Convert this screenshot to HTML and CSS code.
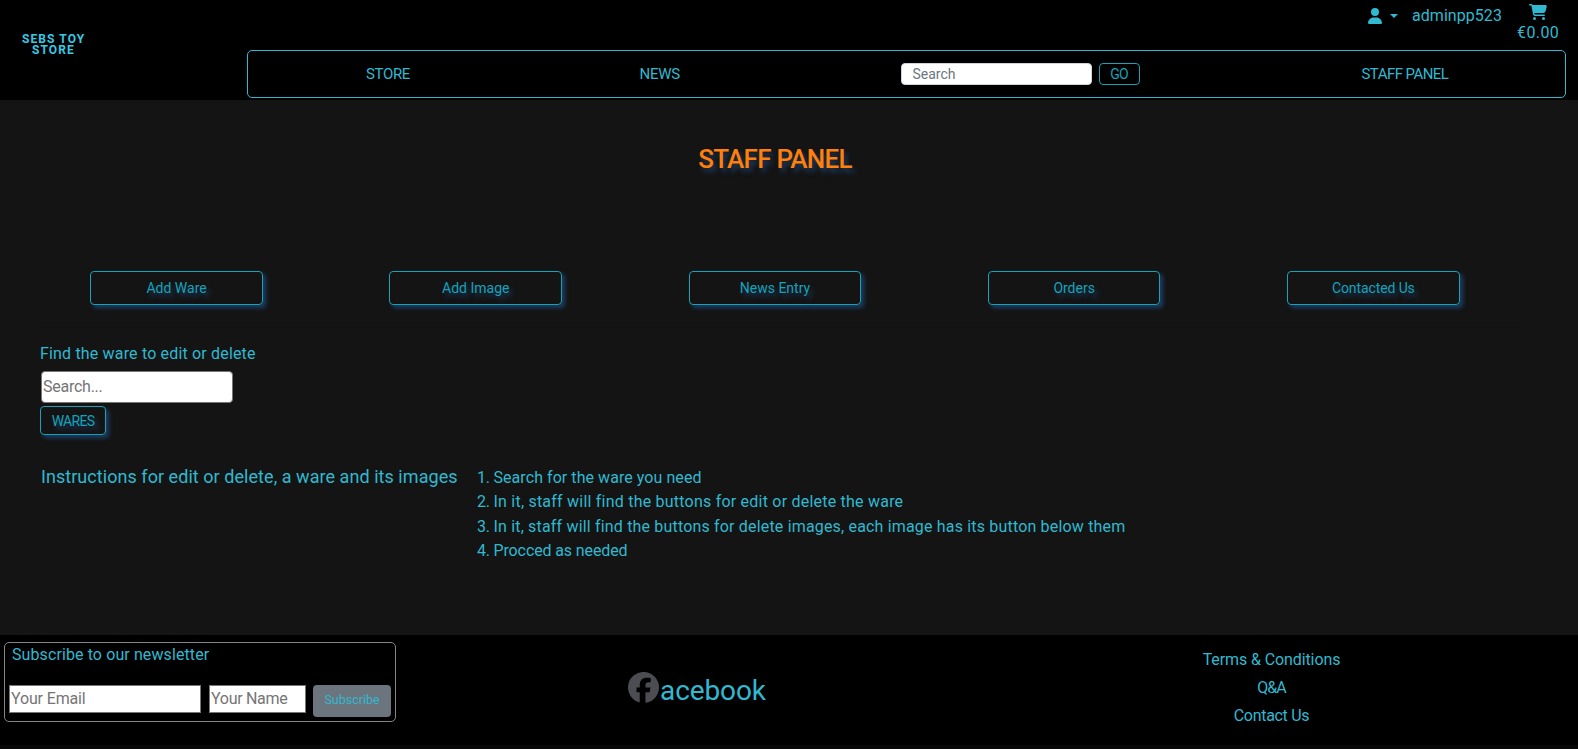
FILE: index.html
```html
<!DOCTYPE html>
<html lang="en">
<head>
<meta charset="utf-8">
<title>Staff Panel</title>
<link rel="stylesheet" href="styles.css">
</head>
<body>
<header class="header">
  <a class="logo"><span class="logo-top">SEBS TOY</span><span class="logo-bottom">STORE</span></a>
  <div class="header-main">
    <div class="account">
      <svg class="user-icon" viewBox="0 0 448 512"><path d="M224 256a128 128 0 1 0 0-256 128 128 0 1 0 0 256zm-46 48C80 304 0 384 0 482c0 17 13 30 30 30h388c17 0 30-13 30-30 0-98-80-178-178-178z"/></svg>
      <span class="caret"></span>
      <span class="username">adminpp523</span>
      <div class="cart">
        <svg class="cart-icon" viewBox="0 0 576 512"><path d="M0 24C0 11 11 0 24 0h46c22 0 41 13 50 32h411c26 0 45 25 38 50l-41 152c-8 32-37 54-70 54H171l5 29c3 11 12 19 24 19h288c13 0 24 11 24 24s-11 24-24 24H200c-35 0-65-25-71-59L77 54c-1-4-4-6-7-6H24C11 48 0 37 0 24zm128 440a48 48 0 1 1 96 0 48 48 0 1 1-96 0zm336-48a48 48 0 1 1 0 96 48 48 0 1 1 0-96z"/></svg>
        <span class="total">€0.00</span>
      </div>
    </div>
    <nav class="nav">
      <a class="nav-store">STORE</a>
      <a class="nav-news">NEWS</a>
      <form class="search"><input class="search-input" placeholder="Search"><button class="go" type="button">GO</button></form>
      <a class="nav-staff">STAFF PANEL</a>
    </nav>
  </div>
</header>
<main class="main">
  <h1 class="title">STAFF PANEL</h1>
  <div class="actions">
    <button class="action">Add Ware</button>
    <button class="action">Add Image</button>
    <button class="action">News Entry</button>
    <button class="action">Orders</button>
    <button class="action b-contact">Contacted Us</button>
  </div>
  <hr class="rule">
  <section class="find">
    <label class="find-label">Find the ware to edit or delete</label>
    <input class="find-input" placeholder="Search...">
    <button class="wares">WARES</button>
  </section>
  <section class="help">
    <h2 class="help-title">Instructions for edit or delete, a ware and its images</h2>
    <ol class="steps">
      <li><span class="num">1.</span><span class="s1">Search for the ware you need</span></li>
      <li><span class="num">2.</span><span class="s2">In it, staff will find the buttons for edit or delete the ware</span></li>
      <li><span class="num">3.</span><span class="s3">In it, staff will find the buttons for delete images, each image has its button below them</span></li>
      <li><span class="num">4.</span><span class="s4">Procced as needed</span></li>
    </ol>
  </section>
</main>
<footer class="footer">
  <form class="newsletter">
    <label class="news-label">Subscribe to our newsletter</label>
    <div class="fields">
      <input class="email" placeholder="Your Email">
      <input class="name" placeholder="Your Name">
      <button class="subscribe" type="button">Subscribe</button>
    </div>
  </form>
  <a class="facebook">
    <svg class="fb-icon" viewBox="0 0 512 512"><path d="M512 256a256 256 0 1 0-318 248V334h-53v-78h53v-34c0-87 39-128 125-128 16 0 44 3 56 6v71c-6-1-16-1-29-1-42 0-58 16-58 57v29h83l-14 78h-69v175A256 256 0 0 0 512 256z"/></svg>
    <span class="fb-text">acebook</span>
  </a>
  <div class="links">
    <a class="terms">Terms &amp; Conditions</a>
    <a class="qa">Q&amp;A</a>
    <a class="contact">Contact Us</a>
  </div>
</footer>
</body>
</html>
```
FILE: styles.css
```css
* { box-sizing: border-box; }
body {
  margin: 0;
  height: 749px;
  overflow: hidden;
  background: #080808;
  color: #30b9d0;
  font: 16px/24px Roboto, "Noto Sans", sans-serif;
}
input, button { font-family: inherit; margin: 0; }
a, span, label, button { white-space: nowrap; }

.header { display: flex; height: 100px; background: #000; }
.logo {
  width: 247px;
  padding: 34px 0 0 22px;
  color: #35cbe5;
  font-size: 12px;
  font-weight: 700;
  line-height: 11px;
}
.logo span { display: block; }
.logo-top { letter-spacing: 1.1px; }
.logo-bottom { padding-left: 10px; letter-spacing: 1.1px; }
.header-main { width: 1319px; }
.account { display: flex; height: 50px; padding-left: 1121px; }
.user-icon { width: 14px; height: 16px; margin-top: 8px; fill: #30b9d0; }
.caret {
  width: 8px;
  height: 4px;
  margin: 14px 14px 0 8px;
  border: 4px solid transparent;
  border-top-color: #30b9d0;
  border-bottom: 0;
}
.username { width: 105px; padding-top: 4px; letter-spacing: .05px; }
.cart { display: flex; flex-direction: column; width: 44px; padding-top: 4px; }
.cart-icon { width: 18px; height: 16px; margin-left: 12px; fill: #30b9d0; }
.total { letter-spacing: .4px; line-height: 25px; }

.nav {
  display: grid;
  grid-template-columns: 273.5px 261px 461px auto;
  align-items: center;
  height: 48px;
  padding-left: 118px;
  border: 1px solid #30b9d0;
  border-radius: 5px;
  font-size: 15px;
}
.nav-store { letter-spacing: -.35px; }
.nav-news { letter-spacing: -.3px; }
.nav-staff { letter-spacing: -.55px; }
.search { display: flex; gap: 7px; }
.search-input {
  width: 191px;
  height: 22px;
  padding: 0 11px;
  border: 1px solid #ced4da;
  border-radius: 4px;
  font-size: 14px;
}
.search-input::placeholder { color: #6c757d; }
.go {
  width: 41px;
  height: 22px;
  padding: 0;
  border: 1px solid #17a2b8;
  border-radius: 4px;
  background: transparent;
  color: #17a2b8;
  font-size: 14px;
  letter-spacing: -.8px;
  line-height: 18px;
}

.main { height: 535px; padding: 43px 55px 0 27px; background: #141414; }
.title {
  margin: 0;
  color: #ff7f0a;
  font-size: 26px;
  font-weight: 500;
  letter-spacing: -.75px;
  line-height: 32px;
  text-align: center;
  text-shadow: 3px 4px 5px #1c3d63;
}
.actions { display: grid; grid-template-columns: repeat(5, 299.2px); justify-items: center; margin-top: 96px; }
.action, .wares {
  padding: 0;
  border: 1px solid #17a2b8;
  border-radius: 4px;
  background: transparent;
  box-shadow: 3px 3px 4px #1c3d63;
  color: #17a2b8;
  font-size: 14px;
  text-shadow: 3px 4px 5px #1c3d63;
}
.action { width: 172.6px; height: 34px; padding-bottom: 1px; }
.b-contact { letter-spacing: -.1px; }
.rule { height: 1px; margin: 22px 0 0 14px; border: 0; background: #121212; }
.find { display: flex; flex-direction: column; align-items: flex-start; padding: 13px 0 0 13px; }
.find-label { margin: 1px 0 5px; letter-spacing: .17px; }
.find-input {
  width: 192px;
  height: 32px;
  margin-left: 1px;
  padding: 0 1px 2px;
  border: 1px solid #767676;
  border-radius: 4px;
  font-size: 16px;
  letter-spacing: -.25px;
}
.wares { width: 66px; height: 29px; margin-top: 3px; letter-spacing: -.7px; }
.help { display: flex; padding: 28px 0 0 14px; }
.help-title { width: 436px; margin: 0; padding-top: 1px; font-size: 18px; font-weight: 400; letter-spacing: .05px; line-height: 25px; }
.steps { margin: 3px 0 0; padding: 0; list-style: none; line-height: 24.33px; }
.steps li { display: flex; }
.num { width: 16.5px; letter-spacing: -.3px; }
.s1 { letter-spacing: .06px; }
.s2 { letter-spacing: .22px; }
.s3 { letter-spacing: .175px; }
.s4 { letter-spacing: -.12px; }

.footer { display: flex; height: 110px; background: #000; }
.newsletter {
  width: 392px;
  height: 80px;
  margin: 7px 0 0 4px;
  padding: 0 4px;
  border: 1px solid #858585;
  border-radius: 5px;
}
.news-label { display: block; padding-left: 3px; letter-spacing: .1px; }
.fields { display: flex; margin-top: 18px; }
.email, .name { height: 28px; padding: 0 1px 2px; border: 1px solid #767676; font-size: 16px; letter-spacing: -.15px; }
.email { width: 192px; margin-right: 8px; }
.name { width: 97px; margin-right: 7px; letter-spacing: -.3px; }
.email::placeholder, .name::placeholder, .find-input::placeholder { color: #757575; }
.subscribe {
  width: 78px;
  height: 32px;
  padding: 0 0 3px;
  border: 0;
  border-radius: 4px;
  background: #6c757d;
  color: #30b9d0;
  font-size: 12.5px;
}
.facebook { display: flex; width: 604px; padding: 37px 0 0 232px; }
.fb-icon { width: 31px; height: 31px; fill: #4c4d52; }
.fb-text { padding-left: 1px; font-size: 28px; letter-spacing: -.1px; line-height: 38px; }
.links { display: flex; flex-direction: column; align-items: center; width: 543px; padding-top: 11px; line-height: 28px; }
.terms { letter-spacing: -.1px; }
.qa { letter-spacing: -.9px; }
.contact { letter-spacing: -.3px; }
```
